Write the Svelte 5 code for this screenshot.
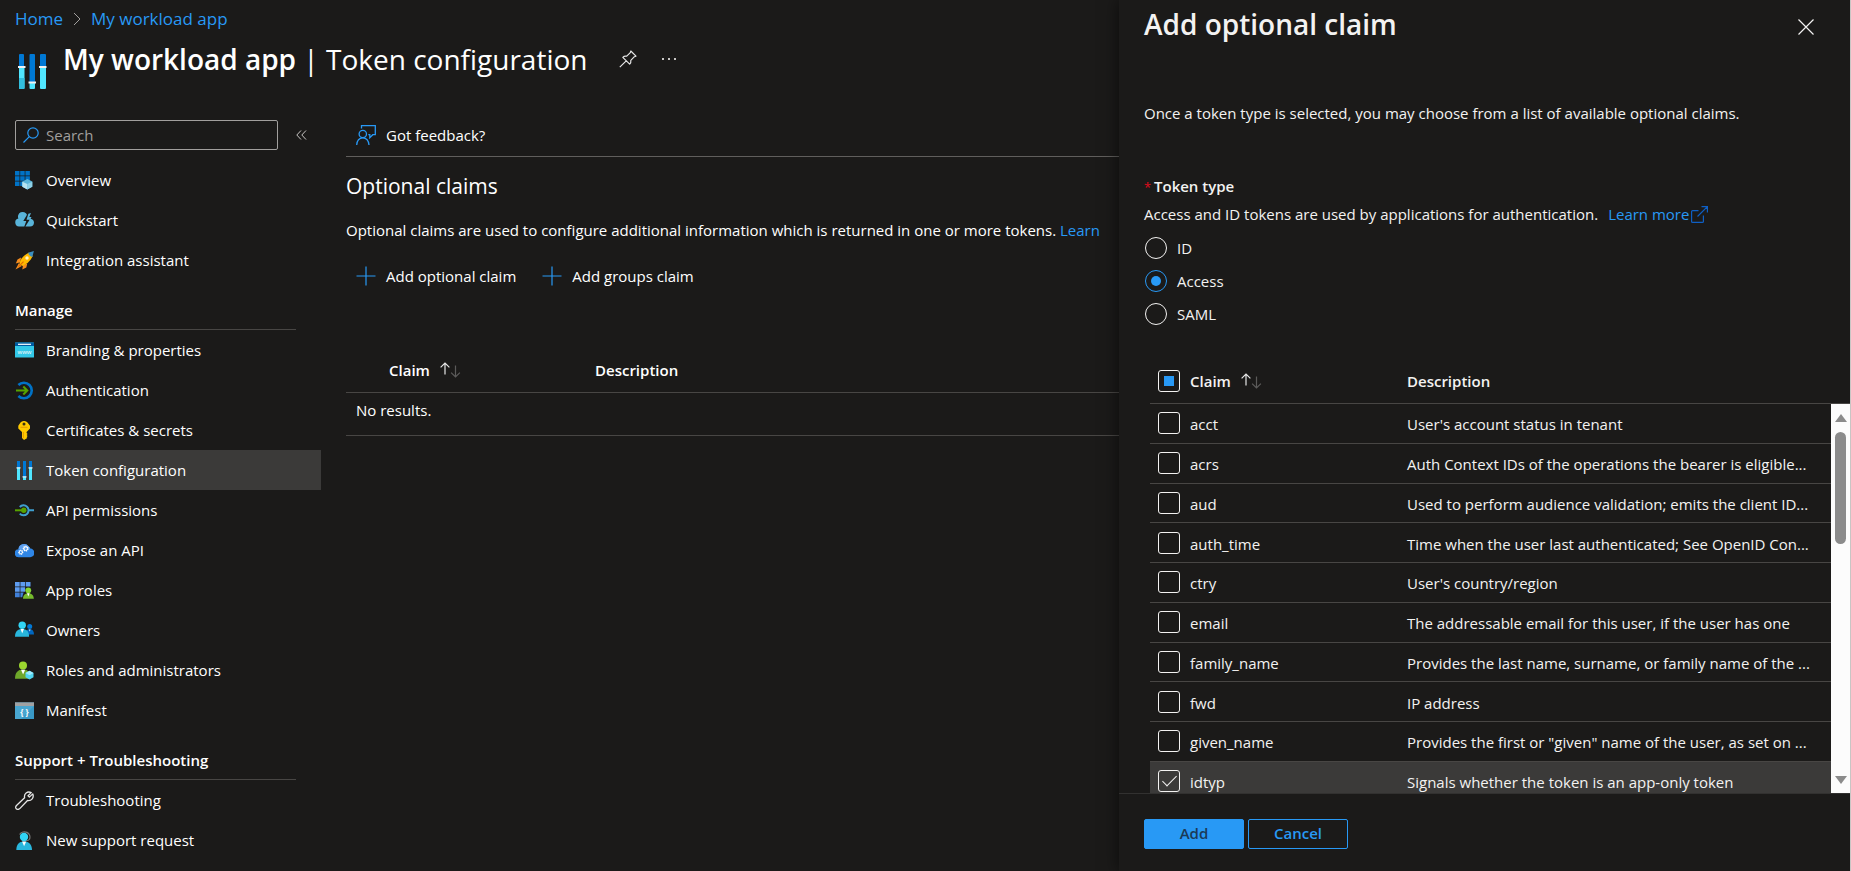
<script>
  const topItems = [
    { icon: 'overview', label: 'Overview' },
    { icon: 'quickstart', label: 'Quickstart' },
    { icon: 'rocket', label: 'Integration assistant' }
  ];
  const manageItems = [
    { icon: 'branding', label: 'Branding & properties' },
    { icon: 'auth', label: 'Authentication' },
    { icon: 'key', label: 'Certificates & secrets' },
    { icon: 'sliders', label: 'Token configuration', active: true },
    { icon: 'permissions', label: 'API permissions' },
    { icon: 'expose', label: 'Expose an API' },
    { icon: 'approles', label: 'App roles' },
    { icon: 'owners', label: 'Owners' },
    { icon: 'admins', label: 'Roles and administrators' },
    { icon: 'manifest', label: 'Manifest' }
  ];
  const supportItems = [
    { icon: 'wrench', label: 'Troubleshooting' },
    { icon: 'support', label: 'New support request' }
  ];

  let tokenType = $state('Access');
  const tokenTypes = ['ID', 'Access', 'SAML'];

  let claims = $state([
    { name: 'acct', text: "User's account status in tenant", checked: false },
    { name: 'acrs', text: 'Auth Context IDs of the operations the bearer is eligible...', checked: false },
    { name: 'aud', text: 'Used to perform audience validation; emits the client ID...', checked: false },
    { name: 'auth_time', text: 'Time when the user last authenticated; See OpenID Con...', checked: false },
    { name: 'ctry', text: "User's country/region", checked: false },
    { name: 'email', text: 'The addressable email for this user, if the user has one', checked: false },
    { name: 'family_name', text: 'Provides the last name, surname, or family name of the ...', checked: false },
    { name: 'fwd', text: 'IP address', checked: false },
    { name: 'given_name', text: 'Provides the first or "given" name of the user, as set on ...', checked: false },
    { name: 'idtyp', text: 'Signals whether the token is an app-only token', checked: true }
  ]);
  let count = $derived(claims.filter((c) => c.checked).length);
</script>

{#snippet icon(name)}
  <svg class="icon" viewBox="0 0 19 19" aria-hidden="true">
    {#if name === 'overview'}
      <path fill="#0072c6" d="M0 0h4.5v4.5H0zM5.2 0h4.5v4.5H5.200zM10.400 0h4.500v4.500h-4.500zM0 5.200h4.500v4.500H0zM5.200 5.200h4.500v4.500H5.200zM10.400 5.200h4.500v4.500h-4.500zM0 10.400h4.500v4.500H0zM5.200 10.400h4.500v4.500H5.200z" />
      <path fill="#59b4d9" d="M12.300 8l5 2.500v5.200L12.300 18.600 7.300 15.700v-5.200z" />
      <path fill="#b7e3f0" d="M7.300 10.700l5 2.400v5.500l-5-2.900z" />
      <path fill="#8dd0e6" d="M17.300 10.700l-5 2.400v5.500l5-2.900z" />
    {:else if name === 'quickstart'}
      <path fill="#59b4d9" d="M4 15.500a4 4 0 0 1-.6-7.900A4.700 4.700 0 0 1 12 3.700L8.300 10h3L9.300 15.500z" />
      <path fill="#59b4d9" d="M13.400 2.800l2.600-.9-1.700 4.200h2.200l-.9 1.600c2 .2 3.400 1.900 3.400 3.900a4 4 0 0 1-4 3.900h-4.600l4.200-6.800h-3.100z" />
    {:else if name === 'rocket'}
      <path fill="#f78d1e" d="M6 6.600L2.500 8.400.8 12.500l4.500-1.200zM12.300 12.500l-1 4-4 2 .7-4.500z" />
      <path fill="#f78d1e" d="M3.800 12.300L.5 18.600l6.300-3.500z" />
      <path fill="#ffb900" d="M4.400 12.400c1-4.600 4.500-8.400 9.600-11l3.800 3.700c-2.500 5-6 8.500-10.600 9.900z" />
      <path fill="#3b8fc0" d="M13.200 1.700L18.900.1l-1.600 5.800c-2.300-.6-3.700-2-4.100-4.200z" />
      <circle cx="12" cy="7" r="1.700" fill="#fff4c2" />
      <path stroke="#e06c00" stroke-width="1.200" d="M3.500 15.600l5-5" />
    {:else if name === 'branding'}
      <rect y="1.500" width="19" height="15" rx=".6" fill="#32c8e8" />
      <path fill="#005ba1" d="M0 4.900V2.100Q0 1.500 .6 1.500h17.800q.6 0 .6.600v2.800z" />
      <path stroke="#fff" stroke-width="1.200" d="M3 3.300h13" />
      <text x="9.500" y="12.500" text-anchor="middle" font-size="6" fill="#fff">www</text>
    {:else if name === 'auth'}
      <path fill="none" stroke="#0072c6" stroke-width="2.600" d="M3.400 4A7.800 7.800 0 1 1 3.400 15" />
      <path fill="none" stroke="#57a300" stroke-width="2" d="M1 9.500h11M8.300 5.500l4 4-4 4" />
    {:else if name === 'key'}
      <path fill="#ffca00" d="M9 0a4.500 4.500 0 0 1 3.500 1.400L15 4.800v2.700L11.600 11v1l1 1-1 1.100 1 1-1 1.100.7.800L9 19l-2-2v-6L3.300 7.500V4.800l2.200-3.400A4.500 4.500 0 0 1 9 0z" />
      <circle cx="9" cy="3" r="1.500" fill="#3b3013" />
      <path stroke="#e89a00" stroke-width="1" d="M5.500 6.300h7M8.400 11v6" />
    {:else if name === 'sliders'}
      <path fill="#0078d4" d="M2 0h3v7H2zM8 0h3v16H8zM14 0h3v7h-3z" />
      <path fill="#50e6ff" d="M2 7h3v12H2zM8 16h3v3H8zM14 7h3v12h-3z" />
      <path fill="#e8f8ff" d="M1.500 6.300h4v1.200h-4zM7.500 15.300h4v1.200h-4zM13.500 6.300h4v1.200h-4z" />
    {:else if name === 'permissions'}
      <path fill="none" stroke="#3f9fcf" stroke-width="2" d="M4.800 6A5 5 0 1 1 4.800 12.600M13.800 9.300H19" />
      <path stroke="#57a300" stroke-width="2" d="M0 9.300h8" />
      <circle cx="8.800" cy="9.300" r="2.700" fill="#57a300" />
    {:else if name === 'expose'}
      <path fill="#2f86e6" d="M4 16.200a4 4 0 0 1-.5-8A5.500 5.500 0 0 1 13.500 5.300a4.800 4.800 0 0 1 1.800 2.300A4.300 4.300 0 0 1 15 16.200z" />
      <path fill="#5ea0ef" d="M3.500 8.200A5.500 5.500 0 0 1 13.500 5.300c1 .8 1.500 1.500 1.800 2.300C11 8 7 9 3.500 8.200z" />
      <circle cx="10.700" cy="7.600" r="2.200" fill="none" stroke="#fff" stroke-width="1.500" stroke-dasharray="1.200 .6" />
      <circle cx="10.700" cy="7.600" r="1.700" fill="none" stroke="#fff" stroke-width=".8" />
      <circle cx="5.800" cy="11.200" r="1.900" fill="none" stroke="#fff" stroke-width="1.300" stroke-dasharray="1 .5" />
      <circle cx="5.800" cy="11.200" r="1.500" fill="none" stroke="#fff" stroke-width=".7" />
    {:else if name === 'approles'}
      <path fill="#5e9cf0" d="M0 1h4.700v4.500H0zM5.400 1h4.700v4.500H5.400zM10.800 1h4.700v4.500h-4.700zM0 6.200h4.700v4.500H0zM5.400 6.200h4.700v4.500H5.400z" />
      <path fill="#3f7fd8" d="M0 11.400h4.700v4.800H0zM5.400 11.400h3.200l-1.400 4.800H5.400z" />
      <circle cx="13.300" cy="9.300" r="2.900" fill="#86d633" />
      <path fill="#76bc2d" d="M8 17.800c0-3 1.500-5.600 5.300-5.600s5.500 2.600 5.500 5.600z" />
      <path fill="#fff" d="M12 12.300h2.600l-1.300 3.200z" />
    {:else if name === 'owners'}
      <circle cx="14.700" cy="5.500" r="2.500" fill="#0078d4" />
      <path fill="#0067c0" d="M10.500 13.500c0-3.500 1.500-5.200 4.200-5.200S19 10 19 13.500z" />
      <path fill="#cfe8ff" d="M13.700 8.400h2l-1 2z" />
      <circle cx="7.200" cy="4.200" r="3.700" fill="#32d4f5" />
      <path fill="#29b6dc" d="M0 15.800C0 11 2.200 8 7.200 8s6.900 3 6.900 7.800z" />
      <path fill="#fff" d="M5.500 8.100H9l-1.800 4.200z" />
    {:else if name === 'admins'}
      <circle cx="8" cy="4.500" r="4" fill="#9bd62f" />
      <path fill="#6fa82a" d="M0 17.800C0 12 2.500 8.600 8 8.600s7.500 3.400 7.500 9.200z" />
      <path fill="#fff" d="M6 8.700h4.200L8.100 13.400z" />
      <path fill="#50d5f0" d="M14.500 9.800l4 2.200v4.200l-4 2.200-4-2.200V12z" />
      <path fill="#9cebff" d="M14.500 9.800l4 2.200-4 2.200-4-2.200z" />
    {:else if name === 'manifest'}
      <rect y="1.400" width="19" height="16.600" fill="#3999c6" />
      <path fill="#59b4d9" d="M0 5h19L6 18H0z" opacity=".5" />
      <path fill="#a0a1a2" d="M0 1.400h19V5H0z" />
      <text x="9.500" y="14" text-anchor="middle" font-size="8" font-weight="700" fill="#fff">{'{ }'}</text>
    {:else if name === 'wrench'}
      <path fill="none" stroke="#e6e6e6" stroke-width="1.300" stroke-linejoin="round" d="M16.200 1.600L13 4.700l1.400 1.400 3.400-3.200c1.400 3.600-1.200 7.200-5.300 6.600L5 17.400c-1.600 1.700-3.700 1-4.200-.4-.3-1 0-1.800.7-2.500L9.600 6.800C8.700 2.700 12.400-.3 16.200 1.600z" />
    {:else if name === 'support'}
      <path fill="none" stroke="#767676" stroke-width="1.200" d="M4.600 3.500C6 .9 9.600.2 12 1.400c2.500 1.300 3.600 4.200 2.500 6.900-.6 1-1.800 1.500-3.500 1.500" />
      <circle cx="9" cy="6" r="4.200" fill="#32d4f5" />
      <path fill="#29b6dc" d="M1.300 19c0-5.500 2.600-8.600 7.700-8.600s8 3.100 8 8.600z" />
      <path fill="#fff" d="M7 10.500h4.200l-2.100 4.700z" />
    {/if}
  </svg>
{/snippet}

{#snippet navList(items)}
  <ul>
    {#each items as item}
      <li><a href="#{item.icon}" class:active={item.active}>{@render icon(item.icon)}{item.label}</a></li>
    {/each}
  </ul>
{/snippet}

{#snippet sort()}
  <svg class="sort" viewBox="0 0 21 16" aria-hidden="true">
    <path fill="none" stroke="#e6e6e6" stroke-width="1.200" d="M5 12.500V1M.6 5.400L5 1l4.400 4.400" />
    <path fill="none" stroke="#5c5b5a" stroke-width="1.200" d="M15.500 3.500V15M11.100 10.600l4.400 4.400 4.400-4.400" />
  </svg>
{/snippet}

{#snippet plus()}
  <svg class="tool-icon" viewBox="0 0 20 20" aria-hidden="true"><path stroke="#2899f5" stroke-width="1.200" d="M10 .5v19M.5 10h19" /></svg>
{/snippet}

<div class="page">
  <header>
    <nav class="crumbs" aria-label="Breadcrumb">
      <a href="#home">Home</a>
      <svg width="8" height="14" viewBox="0 0 8 14" aria-hidden="true"><path fill="none" stroke="#a19f9d" d="M1 1l6 6-6 6" /></svg>
      <a href="#app">My workload app</a>
    </nav>
    <div class="title">
      <svg class="title-icon" viewBox="0 0 29 36" aria-hidden="true">
        <path fill="#0078d4" d="M1 12.500V1q0-1 1-1h3q1 0 1 1v11.500zM11.500 28V1q0-1 1-1h3.500q1 0 1 1v27zM22 12.500V1q0-1 1-1h4q1 0 1 1v11.500z" />
        <path fill="#50e6ff" d="M1 13.500h5.500V34q0 1-1 1H2q-1 0-1-1zM11.500 29H17v5q0 1-1 1h-3.500q-1 0-1-1zM22 13.500h6V34q0 1-1 1h-4q-1 0-1-1z" />
        <path fill="#32bedd" d="M1 24h5.500v10q0 1-1 1H2q-1 0-1-1z" />
        <path fill="#f2f2f2" d="M0 12h7.500v2H0zM10.500 27.500H18v2h-7.500zM21 12h7.500v2H21z" />
      </svg>
      <h1><b>My workload app</b> | Token configuration</h1>
      <button class="ghost pin" aria-label="Pin">
        <svg width="18" height="18" viewBox="0 0 18 18" aria-hidden="true"><path fill="none" stroke="#e6e6e6" stroke-width="1.200" stroke-linejoin="round" d="M11.800 1l5.200 5.200-1.600.5-3.600 3.600c.3 1.800-.2 3-1.100 3.900L3.800 7.300c1-1 2.300-1.400 3.900-1.100l3.600-3.600zM7.200 10.800L.8 17.200" /></svg>
      </button>
      <button class="ghost" aria-label="More">
        <svg width="14" height="4" viewBox="0 0 14 4" aria-hidden="true"><path fill="#c8c6c4" d="M0 1h2v2H0zM6 1h2v2H6zM12 1h2v2h-2z" /></svg>
      </button>
    </div>
  </header>

  <div class="columns">
    <aside>
      <div class="search-row">
        <div class="search">
          <svg width="16" height="16" viewBox="0 0 16 16" aria-hidden="true"><g fill="none" stroke="#2899f5" stroke-width="1.200"><circle cx="10" cy="6" r="5.200" /><path d="M6.300 9.700L.5 15.500" /></g></svg>
          <input type="search" placeholder="Search" aria-label="Search" />
        </div>
        <button class="ghost" aria-label="Collapse menu">
          <svg width="11" height="10" viewBox="0 0 11 10" aria-hidden="true"><path fill="none" stroke="#c8c6c4" d="M5 .5L.8 5 5 9.500M10 .5L5.800 5l4.200 4.500" /></svg>
        </button>
      </div>
      <nav class="menu" aria-label="Resource menu">
        {@render navList(topItems)}
        <h3>Manage</h3>
        {@render navList(manageItems)}
        <h3>Support + Troubleshooting</h3>
        {@render navList(supportItems)}
      </nav>
    </aside>

    <main>
      <div class="toolbar">
        <button class="tool">
          <svg class="tool-icon" viewBox="0 0 20 20" aria-hidden="true"><g fill="none" stroke="#2899f5" stroke-width="1.300"><path d="M5.500 3.500V.7h13.800v9h-2.500l-3 3V9.700h-1.500" /><circle cx="6.800" cy="9" r="3.700" /><path d="M.7 20c.3-4.400 2.500-7.200 6.100-7.200S12.600 15.600 13 20" /></g></svg>
          Got feedback?
        </button>
      </div>
      <h2>Optional claims</h2>
      <p>Optional claims are used to configure additional information which is returned in one or more tokens. <a href="#learn">Learn</a></p>
      <div class="actions">
        <button class="tool">{@render plus()}Add optional claim</button>
        <button class="tool">{@render plus()}Add groups claim</button>
      </div>
      <table class="results">
        <thead>
          <tr><th class="first"><span class="sortable">Claim {@render sort()}</span></th><th>Description</th></tr>
        </thead>
        <tbody>
          <tr><td colspan="2">No results.</td></tr>
        </tbody>
      </table>
    </main>
  </div>

  <section class="panel" aria-labelledby="panel-title">
    <div class="panel-head">
      <h2 id="panel-title">Add optional claim</h2>
      <button class="ghost" aria-label="Close">
        <svg width="16" height="16" viewBox="0 0 16 16" aria-hidden="true"><path stroke="#f3f2f1" stroke-width="1.200" d="M.5.5l15 15M15.500.5l-15 15" /></svg>
      </button>
    </div>
    <p class="intro">Once a token type is selected, you may choose from a list of available optional claims.</p>
    <fieldset>
      <legend><span class="star">*</span>Token type</legend>
      <p>
        Access and ID tokens are used by applications for authentication.
        <a href="#more">Learn more<svg width="17" height="17" viewBox="0 0 17 17" aria-hidden="true"><path fill="none" stroke="#0f5fc4" stroke-width="1.200" d="M7.500 4.600H1.600q-1 0-1 1v9.800q0 1 1 1h9.800q1 0 1-1V9.600M10.500.6h5.900v5.900M16.400.6L6.500 10.500" /></svg></a>
      </p>
      {#each tokenTypes as type}
        <label class="radio"><input type="radio" name="token-type" value={type} bind:group={tokenType} />{type}</label>
      {/each}
    </fieldset>

    <div class="claims">
      <table class="claims-head">
        <thead>
          <tr>
            <th class="check"><input type="checkbox" aria-label="Select all" indeterminate={count > 0 && count < claims.length} /></th>
            <th class="name"><span class="sortable">Claim {@render sort()}</span></th>
            <th>Description</th>
          </tr>
        </thead>
      </table>
      <div class="scroller">
        <div class="rows">
          <table class="claims-body">
            <tbody>
              {#each claims as claim}
                <tr class:selected={claim.checked}>
                  <td class="check"><input type="checkbox" id="claim-{claim.name}" bind:checked={claim.checked} /></td>
                  <td class="name"><label for="claim-{claim.name}">{claim.name}</label></td>
                  <td>{claim.text}</td>
                </tr>
              {/each}
            </tbody>
          </table>
        </div>
        <div class="track" aria-hidden="true">
          <span class="up"></span>
          <span class="thumb"></span>
          <span class="down"></span>
        </div>
      </div>
    </div>

    <footer>
      <button class="primary">Add</button>
      <button class="secondary">Cancel</button>
    </footer>
  </section>
</div>

<style>
  :global(body) { margin: 0; background: #1b1a19; }
  .page, .page * { box-sizing: border-box; }
  .page {
    position: relative;
    min-height: 100vh;
    overflow: hidden;
    background: #1b1a19;
    color: #fff;
    font: 15px/20px "Segoe UI", "Open Sans", "Noto Sans", sans-serif;
  }
  h1, h2, h3, p, ul, fieldset { margin: 0; padding: 0; border: 0; font-weight: 400; }
  ul { list-style: none; }
  a { color: #2899f5; text-decoration: none; }
  button, input { font: inherit; color: inherit; margin: 0; }
  button { padding: 0; border: 0; background: none; }
  svg { display: block; flex: none; }
  table { width: 100%; border-collapse: collapse; table-layout: fixed; }
  th, td { padding: 0; text-align: left; white-space: nowrap; }
  th { font-weight: 600; }
  .ghost { display: flex; align-items: center; justify-content: center; }

  header { height: 110px; padding: 9px 15px 0; }
  .crumbs { display: flex; align-items: center; gap: 10px; font-size: 17px; }
  .title { display: flex; align-items: center; padding: 10px 0 0 3px; }
  .title-icon { width: 29px; height: 36px; margin: 15px 16px -11px 0; align-self: flex-start; }
  h1 { font-size: 28px; line-height: 40px; white-space: nowrap; }
  h1 b { font-weight: 600; }
  .title .pin { margin: 0 25px 0 31px; }

  .columns { display: flex; }
  aside { flex: none; width: 321px; padding-top: 10px; }
  .search-row { display: flex; align-items: center; gap: 18px; padding-left: 15px; margin-bottom: 10px; }
  .search { display: flex; align-items: center; gap: 7px; width: 263px; height: 30px; padding: 0 7px; border: 1px solid #a19f9d; border-radius: 2px; }
  .search input { flex: 1; min-width: 0; padding: 0; border: 0; outline: 0; background: none; }
  .search input::placeholder { color: #a19f9d; opacity: 1; }
  .menu a { display: flex; align-items: center; gap: 12px; height: 40px; padding-left: 15px; color: #fff; }
  .menu a.active { background: #3b3a39; }
  .icon { width: 19px; height: 19px; }
  h3 { margin: 0 25px 0 15px; padding: 20px 0 9px; border-bottom: 1px solid #484644; font-size: 15px; font-weight: 600; line-height: 20px; }

  main { flex: 1; min-width: 0; margin-left: 25px; padding-top: 6px; }
  .toolbar { display: flex; height: 41px; padding: 0 0 2px 10px; border-bottom: 1px solid #605e5c; }
  .tool { display: flex; align-items: center; gap: 10px; white-space: nowrap; }
  .tool-icon { width: 20px; height: 20px; }
  main h2 { margin: 15px 0 20px; font-size: 21px; line-height: 28px; }
  .actions { display: flex; gap: 26px; height: 36px; margin: 18px 0 55px; padding-left: 10px; }
  .results tr { border-bottom: 1px solid #484644; }
  .results th { height: 43px; }
  .results .first { width: 249px; padding-left: 43px; }
  .results td { padding: 7px 10px 15px; }
  .sortable { display: flex; align-items: center; gap: 10px; }
  .sort { width: 21px; height: 16px; }

  .panel {
    position: absolute;
    inset: 0 0 0 auto;
    display: flex;
    flex-direction: column;
    width: 732px;
    border-right: 1px solid #c8c6c4;
    background: #1b1a19;
    color: #f3f2f1;
    box-shadow: 0 0 16px rgba(0, 0, 0, .6);
  }
  .panel-head { display: flex; align-items: center; justify-content: space-between; height: 54px; padding: 0 36px 0 25px; }
  .panel-head h2 { padding-bottom: 6px; font-size: 28px; line-height: 40px; font-weight: 600; }
  .intro { padding: 49px 25px 0; }
  fieldset { min-width: 0; padding: 0 25px; margin-top: 53px; }
  legend { padding: 0; font-weight: 600; }
  .star { display: inline-block; width: 10px; color: #e00b1c; font-size: 13px; font-weight: 400; }
  fieldset p { display: flex; align-items: center; gap: 10px; margin: 7px 0; }
  fieldset a { display: flex; align-items: center; gap: 2px; }
  .radio { display: flex; align-items: center; gap: 10px; height: 33px; }
  .radio input { appearance: none; display: grid; place-items: center; width: 22px; height: 22px; margin-left: 1px; border: 1px solid #f3f2f1; border-radius: 50%; }
  .radio input:checked { border-color: #2899f5; }
  .radio input:checked::after { content: ""; width: 10px; height: 10px; border-radius: 50%; background: #2899f5; }

  .claims { flex: 1; min-height: 0; display: flex; flex-direction: column; margin: 29px 0 0 31px; }
  .claims input { appearance: none; display: grid; place-items: center; width: 22px; height: 22px; border: 1px solid #f3f2f1; border-radius: 3px; }
  .claims input:indeterminate::after { content: ""; width: 10px; height: 10px; background: #2899f5; }
  .claims input:checked::after { content: ""; width: 6px; height: 13px; margin-bottom: 5px; border: solid #f3f2f1; border-width: 0 1px 1px 0; transform: rotate(45deg); }
  .claims .check { width: 40px; padding: 0 0 0 8px; }
  .claims .name { width: 217px; }
  .claims-head th { height: 44px; }
  .claims tr { border-bottom: 1px solid #484644; }
  .scroller { flex: 1; min-height: 0; display: flex; }
  .rows { flex: 1; min-width: 0; overflow: hidden; }
  .claims-body { height: 398px; }
  .claims-body td { height: 39px; padding-top: 2px; }
  .selected { background: #3b3a39; }
  .track { display: flex; flex-direction: column; align-items: center; width: 19px; padding: 10px 0 9px; background: #fcfcfc; }
  .up, .down { border: 6px solid transparent; }
  .up { border-top: 0; border-bottom: 8px solid #8b8b8b; }
  .down { margin-top: auto; border-bottom: 0; border-top: 8px solid #8b8b8b; }
  .thumb { width: 11px; height: 112px; margin-top: 10px; border-radius: 6px; background: #8b8b8b; }

  footer { display: flex; gap: 4px; height: 78px; padding: 25px 25px 0; border-top: 1px solid #323130; }
  footer button { width: 100px; height: 30px; padding-bottom: 2px; border: 1px solid #2899f5; border-radius: 2px; font-weight: 600; }
  .primary { background: #2899f5; color: #1b3a57; }
  .secondary { color: #2899f5; }
</style>
